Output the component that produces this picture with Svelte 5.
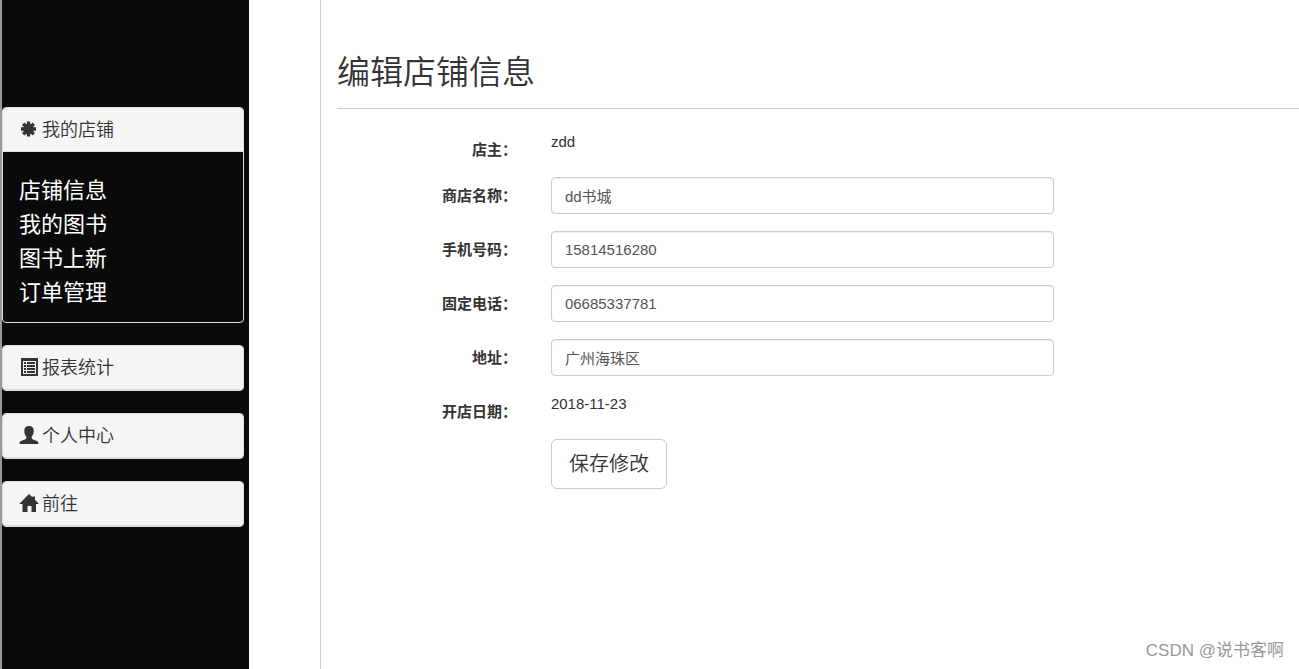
<script>

	let shop = $state({
		name: 'dd书城',
		mobile: '15814516280',
		phone: '06685337781',
		address: '广州海珠区'
	});

	const fields = [
		{ key: 'name', label: '商店名称：' },
		{ key: 'mobile', label: '手机号码：' },
		{ key: 'phone', label: '固定电话：' },
		{ key: 'address', label: '地址：' }
	];

	const links = ['店铺信息', '我的图书', '图书上新', '订单管理'];

	const menus = [
		{ icon: 'list', title: '报表统计' },
		{ icon: 'user', title: '个人中心' },
		{ icon: 'home', title: '前往' }
	];

</script>

{#snippet icon(name)}
	<svg class="icon" viewBox="0 0 18 18" aria-hidden="true">
		{#if name === 'asterisk'}
			<g stroke="currentColor" stroke-width="3.4">
				<path d="M8.500 1.500v15M1 9h15M3.200 3.700l10.600 10.600M13.800 3.700L3.200 14.300" />
			</g>
			<circle cx="8.500" cy="9" r="5.200" />
		{:else if name === 'list'}
			<path fill-rule="evenodd" d="M1 0h17v18H1zM3 3v13h13V3z" />
			<path d="M4 4h2v2H4zM7 4h8v2H7zM4 7h2v2H4zM7 7h8v2H7zM4 10h2v2H4zM7 10h8v2H7zM4 13h2v2H4zM7 13h8v2H7z" />
		{:else if name === 'user'}
			<path d="M9 0c3.200 0 4.700 1.800 4.700 4.900 0 2.400-.8 4.300-2 5.500v1.700c0 .6.3.9.9 1.200l4.200 1.700c1 .4 1.500 1 1.500 2v1H-.5v-1c0-1 .6-1.600 1.500-2l4.400-1.700c.6-.3.9-.6.9-1.200v-1.700c-1.200-1.200-2-3.100-2-5.500C4.300 1.800 5.800 0 9 0z" />
		{:else}
			<path d="M9 0l3.500 3.300V2.500H15v3.200l4 4.300h-3v8h-4.500v-6h-4v6H2.500v-8H-.8z" />
		{/if}
	</svg>
{/snippet}

<div class="page">
	<nav class="sidebar">
		<section class="panel">
			<button type="button" class="panel-heading">{@render icon('asterisk')}<span>我的店铺</span></button>
			<ul class="panel-body">
				{#each links as link}
					<li><a href="#shop">{link}</a></li>
				{/each}
			</ul>
		</section>
		{#each menus as menu}
			<section class="panel">
				<button type="button" class="panel-heading">{@render icon(menu.icon)}<span>{menu.title}</span></button>
			</section>
		{/each}
	</nav>

	<main>
		<h1>编辑店铺信息</h1>
		<form onsubmit={(e) => e.preventDefault()}>
			<label for="owner">店主：</label>
			<output id="owner">zdd</output>
			{#each fields as field}
				<label for={field.key}>{field.label}</label>
				<input id={field.key} type="text" bind:value={shop[field.key]} />
			{/each}
			<label for="opened">开店日期：</label>
			<output id="opened">2018-11-23</output>
			<button type="submit" class="save">保存修改</button>
		</form>
	</main>

	<div class="watermark">CSDN @说书客啊</div>
</div>

<style>

	:global(body) {
		margin: 0;
		background: #fff;
	}

	.page {
		display: flex;
		position: relative;
		min-height: 100vh;
		color: #333;
		font-family: "Liberation Sans", "Noto Sans CJK SC", sans-serif;
		font-size: 15px;
		line-height: 21px;
	}

	.sidebar {
		box-sizing: border-box;
		flex: 0 0 249px;
		display: flex;
		flex-direction: column;
		gap: 22px;
		padding: 107px 5px 0 0;
		border-left: 2px solid #999;
		background: #0a0a0a;
	}

	.panel {
		border: 1px solid #ddd;
		border-radius: 4px;
		overflow: hidden;
	}

	.panel-heading {
		display: flex;
		align-items: center;
		gap: 4px;
		width: 100%;
		height: 44px;
		padding: 1px 17px 0;
		border: 0;
		border-bottom: 1px solid #ddd;
		background: #f5f5f5;
		color: #333;
		font: 350 18px/24px "Liberation Sans", "Noto Sans CJK SC", sans-serif;
		cursor: pointer;
	}

	.icon {
		width: 18px;
		height: 18px;
		margin-top: -3px;
		fill: currentColor;
		overflow: visible;
	}

	.panel-body {
		margin: 0;
		padding: 22px 16px 12px;
		list-style: none;
		font-size: 22px;
		line-height: 34px;
	}

	.panel-body a {
		color: #fff;
		text-decoration: none;
	}

	main {
		flex: 1;
		min-width: 0;
		margin-left: 71px;
		padding: 52px 0 0 16px;
		border-left: 1px solid #ccc;
	}

	h1 {
		margin: 0 0 22px;
		padding-bottom: 14px;
		border-bottom: 1px solid #ccc;
		font-size: 33px;
		font-weight: 350;
		line-height: 42px;
	}

	form {
		display: grid;
		grid-template-columns: 18.7% 52.3%;
		gap: 17px 34px;
		align-items: start;
	}

	label {
		padding-top: 8px;
		font-weight: bold;
		text-align: right;
	}

	input {
		box-sizing: border-box;
		width: 100%;
		height: 37px;
		padding: 6px 13px;
		border: 1px solid #ccc;
		border-radius: 4px;
		box-shadow: inset 0 1px 1px rgba(0, 0, 0, 0.075);
		color: #555;
		font: inherit;
	}

	.save {
		grid-column: 2;
		justify-self: start;
		height: 50px;
		padding: 0 17px;
		border: 1px solid #ccc;
		border-radius: 6px;
		background: #fff;
		color: #333;
		font: 350 20px/28px "Liberation Sans", "Noto Sans CJK SC", sans-serif;
		cursor: pointer;
	}

	.watermark {
		position: absolute;
		right: 15px;
		bottom: 6px;
		color: #999;
		font-size: 17px;
		line-height: 24px;
	}

</style>
